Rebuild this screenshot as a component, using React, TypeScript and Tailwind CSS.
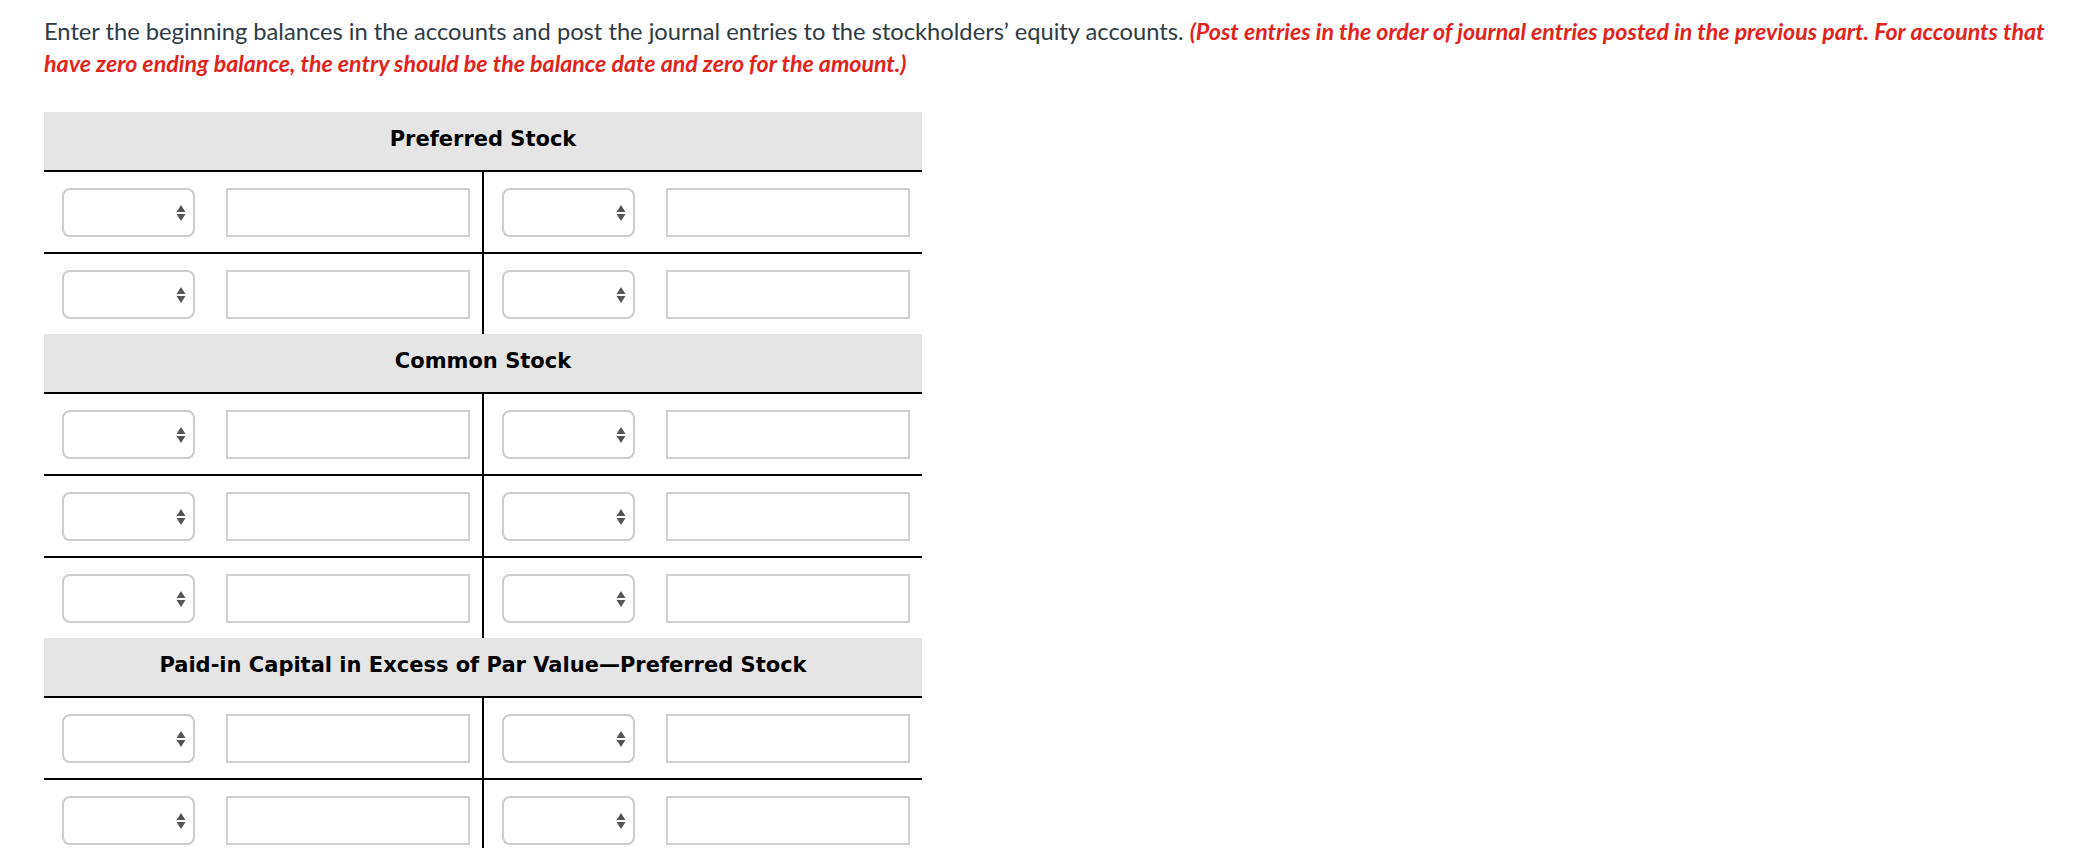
import React from "react";

function Arrows() {
  return (
    <svg width="10" height="20" viewBox="0 0 10 20" className="shrink-0">
      <polygon points="5,2 9.5,9 0.5,9" fill="#555" />
      <polygon points="0.5,11 9.5,11 5,18" fill="#555" />
    </svg>
  );
}

function Half() {
  return (
    <div className="flex items-center w-[438px] pl-[18px] pt-[16px] pb-[15px]">
      <div className="w-[133px] h-[49px] border-2 border-[#cccccc] rounded-[8px] bg-white flex items-center justify-end pr-[7px]">
        <Arrows />
      </div>
      <div className="ml-[31px] w-[244px] h-[49px] border-2 border-[#d0d0d0] bg-white" />
    </div>
  );
}

function Row({ last }: { last?: boolean }) {
  return (
    <div className={last ? "flex" : "flex border-b-2 border-black"}>
      <Half />
      <div className="w-[2px] bg-black" />
      <Half />
    </div>
  );
}

function Section({ title, rows }: { title: string; rows: number }) {
  return (
    <div>
      <div
        className="h-[60px] bg-[#e5e5e5] border-b-2 border-black flex items-center justify-center text-[21px] font-bold text-black pb-[2px]"
        style={{ fontFamily: '"DejaVu Sans", Verdana, sans-serif' }}
      >
        {title}
      </div>
      {Array.from({ length: rows }).map((_, i) => (
        <Row key={i} last={i === rows - 1} />
      ))}
    </div>
  );
}

export default function App() {
  return (
    <div className="bg-white w-[2098px] min-h-[848px] overflow-hidden">
      <p
        className="pl-[44px] pt-[15px] text-[23.7px] leading-[32px] text-[#2d3b45] w-[2060px]"
        style={{ fontFamily: 'Lato, "Liberation Sans", sans-serif' }}
      >
        Enter the beginning balances in the accounts and post the journal entries to the stockholders’ equity accounts.{" "}
        <span className="text-[#e2231a] font-bold italic text-[23.2px]">
          (Post entries in the order of journal entries posted in the previous part. For accounts that have zero ending balance, the entry should be the balance date and zero for the amount.)
        </span>
      </p>
      <div className="ml-[44px] mt-[33px] w-[878px]">
        <Section title="Preferred Stock" rows={2} />
        <Section title="Common Stock" rows={3} />
        <Section title="Paid-in Capital in Excess of Par Value—Preferred Stock" rows={2} />
      </div>
    </div>
  );
}
